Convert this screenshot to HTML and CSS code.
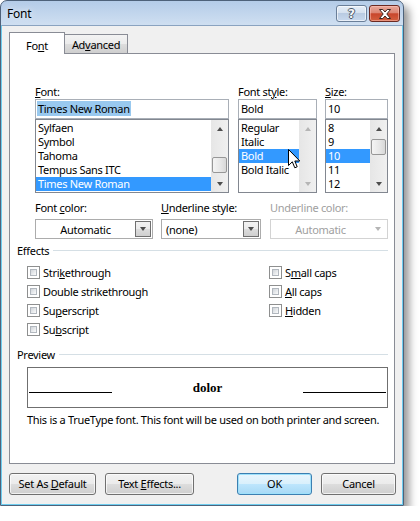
FILE: index.html
```html
<!DOCTYPE html>
<html>
<head>
<meta charset="utf-8">
<link rel="stylesheet" href="styles.css">
</head>
<body>
<div class="window">
  <div class="titlebar">
    <span class="title">Font</span>
    <div class="caption">
      <div class="cbtn help"><span>?</span></div>
      <div class="cbtn close">
        <svg width="12" height="10" viewBox="0 0 12 10"><path d="M0.5 0.5 H3.8 L6 3 L8.2 0.5 H11.5 L7.8 5 L11.5 9.5 H8.2 L6 7 L3.8 9.5 H0.5 L4.2 5 Z" fill="#fff" stroke="#3a2620" stroke-width="1"/></svg>
      </div>
    </div>
  </div>
  <div class="client">
    <div class="tabs">
      <div class="tab active">Fo<u>n</u>t</div>
      <div class="tab">Ad<u>v</u>anced</div>
    </div>
    <div class="panel">
      <div class="row1">
        <div class="col c-font">
          <div class="lbl"><u>F</u>ont:</div>
          <div class="input"><span class="hl">Times New Roman</span></div>
          <div class="list">
            <div class="items">
              <div class="item">Sylfaen</div>
              <div class="item">Symbol</div>
              <div class="item">Tahoma</div>
              <div class="item">Tempus Sans ITC</div>
              <div class="item sel">Times New Roman</div>
            </div>
            <div class="sb">
              <div class="sbtn"><i class="up"></i></div>
              <div class="track"><div class="thumb t-font"></div></div>
              <div class="sbtn"><i class="down"></i></div>
            </div>
          </div>
        </div>
        <div class="col c-style">
          <div class="lbl">Font st<u>y</u>le:</div>
          <div class="input"><span>Bold</span></div>
          <div class="list">
            <div class="items">
              <div class="item">Regular</div>
              <div class="item">Italic</div>
              <div class="item sel">Bold</div>
              <div class="item">Bold Italic</div>
            </div>
            <div class="sb">
              <div class="sbtn"><i class="up dis"></i></div>
              <div class="track"></div>
              <div class="sbtn"><i class="down dis"></i></div>
            </div>
          </div>
        </div>
        <div class="col c-size">
          <div class="lbl"><u>S</u>ize:</div>
          <div class="input"><span>10</span></div>
          <div class="list">
            <div class="items">
              <div class="item">8</div>
              <div class="item">9</div>
              <div class="item sel">10</div>
              <div class="item">11</div>
              <div class="item">12</div>
            </div>
            <div class="sb">
              <div class="sbtn"><i class="up"></i></div>
              <div class="track"><div class="thumb t-size"></div></div>
              <div class="sbtn"><i class="down"></i></div>
            </div>
          </div>
        </div>
      </div>

      <div class="row2">
        <div class="col d-color">
          <div class="lbl">Font <u>c</u>olor:</div>
          <div class="dd"><span class="val center">Automatic</span><span class="ddbtn"><i class="down"></i></span></div>
        </div>
        <div class="col d-ustyle">
          <div class="lbl"><u>U</u>nderline style:</div>
          <div class="dd"><span class="val left">(none)</span><span class="ddbtn"><i class="down"></i></span></div>
        </div>
        <div class="col d-ucolor">
          <div class="lbl dis-text">Underline color:</div>
          <div class="dd disabled"><span class="val center">Automatic</span><span class="ddbtn plain"><i class="down dis"></i></span></div>
        </div>
      </div>

      <div class="group-head"><span>Effects</span><div class="rule"></div></div>
      <div class="effects">
        <div class="ecol left">
          <div class="cbrow"><span class="cb"></span><span>Stri<u>k</u>ethrough</span></div>
          <div class="cbrow"><span class="cb"></span><span>Double strikethrough</span></div>
          <div class="cbrow"><span class="cb"></span><span>Su<u>p</u>erscript</span></div>
          <div class="cbrow"><span class="cb"></span><span>Su<u>b</u>script</span></div>
        </div>
        <div class="ecol">
          <div class="cbrow"><span class="cb"></span><span>S<u>m</u>all caps</span></div>
          <div class="cbrow"><span class="cb"></span><span><u>A</u>ll caps</span></div>
          <div class="cbrow"><span class="cb"></span><span><u>H</u>idden</span></div>
        </div>
      </div>

      <div class="group-head preview-head"><span>Preview</span><div class="rule"></div></div>
      <div class="preview">
        <div class="pline"></div>
        <div class="ptext"><span>dolor</span></div>
        <div class="pline"></div>
      </div>
      <div class="desc">This is a TrueType font. This font will be used on both printer and screen.</div>
    </div>
    <div class="buttons">
      <div class="btn b-default">Set As <u>D</u>efault</div>
      <div class="btn b-effects">Text <u>E</u>ffects...</div>
      <div class="btn b-ok">OK</div>
      <div class="btn b-cancel">Cancel</div>
    </div>
  </div>
  <svg class="cursor" width="13" height="21" viewBox="0 0 13 21"><path d="M0.5 0.5 L0.5 16.5 L4.3 12.8 L6.8 18.8 L9.2 17.8 L6.8 12 L11.8 12 Z" fill="#fff" stroke="#000" stroke-width="1" stroke-linejoin="miter"/></svg>
</div>
</body>
</html>
```

FILE: styles.css
```css
body {
  margin: 0;
  background: #fff;
  font-family: "Noto Sans", "Open Sans", sans-serif;
  font-size: 11px;
  letter-spacing: -0.3px;
  color: #000;
}
u { text-decoration: underline; text-underline-offset: 1px; }

.window {
  position: relative;
  width: 404px;
  height: 506px;
  box-sizing: border-box;
  border: 1px solid #4e627a;
  border-radius: 7px 7px 0 0;
  background: linear-gradient(180deg, #b4cce8 0, #cfdff1 24px, #b9d1ea 100%);
  box-shadow: 5px 6px 8px rgba(0, 0, 0, 0.42);
  display: flex;
  flex-direction: column;
}

.titlebar {
  height: 24px;
  display: flex;
  align-items: flex-start;
  padding-left: 6px;
  box-sizing: border-box;
}
.title {
  margin-top: 5px;
  line-height: 16px;
  font-size: 12px;
  letter-spacing: -0.2px;
  color: #000;
  text-shadow: 0 0 6px rgba(255,255,255,0.9);
}
.caption {
  margin-left: auto;
  margin-top: 4px;
  margin-right: 3px;
  display: flex;
  gap: 2px;
}
.cbtn {
  width: 31px;
  height: 17px;
  box-sizing: border-box;
  border-radius: 3px;
  display: flex;
  align-items: center;
  justify-content: center;
}
.help {
  border: 1px solid #6a7f99;
  background: linear-gradient(180deg, #e6eef8 0, #d5e1ef 45%, #b9cbe2 50%, #c8d9ee 100%);
  box-shadow: inset 0 0 0 1px rgba(255,255,255,0.6);
}
.help span {
  font-family: "DejaVu Sans", sans-serif;
  font-weight: bold;
  font-size: 12px;
  line-height: 12px;
  letter-spacing: 0;
  color: #f4f6f8;
  text-shadow: 1px 0 0 #4c5a6a, -1px 0 0 #4c5a6a, 0 1px 0 #4c5a6a, 0 -1px 0 #4c5a6a;
}
.close {
  width: 31px;
  border: 1px solid #6b2a22;
  background: linear-gradient(180deg, #e9a99b 0, #dc8573 45%, #c8462c 52%, #d4603f 100%);
  box-shadow: inset 0 0 0 1px rgba(255,200,190,0.5);
}
.close svg { display: block; }

.client {
  flex: 1;
  background: #f0f0f0;
  border: 1px solid #6ecdef;
  border-top-color: #8aa3c0;
  padding: 6px 7px 0 7px;
  display: flex;
  flex-direction: column;
}

.tabs {
  display: flex;
  align-items: flex-end;
  height: 22px;
  margin-bottom: -1px;
  position: relative;
  z-index: 1;
}
.tab {
  box-sizing: border-box;
  text-align: center;
  border: 1px solid #898c95;
}
.tab.active {
  width: 56px;
  height: 22px;
  background: #fff;
  border-bottom: none;
  padding-top: 4px;
  line-height: 17px;
}
.tab:not(.active) {
  width: 63px;
  height: 19px;
  margin-bottom: 1px;
  border-left: none;
  border-bottom: none;
  background: linear-gradient(180deg, #f3f3f3 0, #ebebeb 50%, #dddddd 50%, #cfcfcf 100%);
  padding-top: 1px;
  line-height: 17px;
}

.panel {
  height: 411px;
  box-sizing: border-box;
  border: 1px solid #898c95;
  background: #fff;
  display: flex;
  flex-direction: column;
}

.lbl {
  height: 15px;
  line-height: 15px;
  white-space: nowrap;
}
.dis-text { color: #a0a0a0; }

.row1 {
  display: flex;
  margin-top: 30px;
  margin-left: 25px;
}
.c-font { width: 194px; }
.c-style { width: 79px; margin-left: 9px; }
.c-size { width: 63px; margin-left: 8px; }

.input {
  height: 20px;
  box-sizing: border-box;
  border: 1px solid #a9afb7;
  padding: 1px 0 0 2px;
  line-height: 16px;
  white-space: nowrap;
  overflow: hidden;
}
.input .hl { background: #99c9ef; padding: 0 1px; margin-left: -1px; }

.list {
  height: 74px;
  box-sizing: border-box;
  border: 1px solid #828790;
  display: flex;
  overflow: hidden;
}
.items {
  flex: 1;
  padding-top: 1px;
  min-width: 0;
}
.item {
  height: 14px;
  line-height: 14px;
  padding-left: 2px;
  white-space: nowrap;
  overflow: hidden;
}
.item.sel { background: #3399ff; color: #fff; }

.sb {
  width: 17px;
  flex: none;
  display: flex;
  flex-direction: column;
  background: linear-gradient(90deg, #e6e6e6 0, #f0f0f0 100%);
}
.sbtn {
  height: 17px;
  display: flex;
  align-items: center;
  justify-content: center;
}
.track { flex: 1; }
.thumb {
  width: 15px;
  height: 16px;
  margin-left: 1px;
  box-sizing: border-box;
  border: 1px solid #979797;
  border-radius: 2px;
  background: linear-gradient(90deg, #f4f4f4 0, #e6e6e6 60%, #d8d8d8 100%);
}
.t-font { margin-top: 20px; }
.t-size { margin-top: 2px; }

i.up, i.down {
  display: block;
  width: 0;
  height: 0;
  border-left: 3.5px solid transparent;
  border-right: 3.5px solid transparent;
}
i.up { border-bottom: 4px solid #4d4d4d; }
i.down { border-top: 4px solid #4d4d4d; }
i.up.dis { border-bottom-color: #b5b5b5; }
i.down.dis { border-top-color: #b5b5b5; }

.row2 {
  display: flex;
  margin-top: 7px;
  margin-left: 25px;
}
.d-color { width: 118px; }
.d-ustyle { width: 100px; margin-left: 8px; }
.d-ucolor { width: 118px; margin-left: 9px; }

.dd {
  margin-top: 4px;
  height: 20px;
  box-sizing: border-box;
  border: 1px solid #acacac;
  background: #fff;
  display: flex;
  align-items: center;
}
.dd .val { flex: 1; white-space: nowrap; }
.dd .val.center { text-align: center; }
.dd .val.left { padding-left: 4px; }
.ddbtn {
  width: 16px;
  height: 16px;
  margin-right: 1px;
  box-sizing: border-box;
  border: 1px solid #707070;
  background: linear-gradient(180deg, #f2f2f2 0, #ebebeb 50%, #dddddd 50%, #cfcfcf 100%);
  display: flex;
  align-items: center;
  justify-content: center;
}
.ddbtn.plain { border: none; background: none; }
.dd.disabled { border-color: #d3d3d3; color: #a0a0a0; }

.group-head {
  display: flex;
  align-items: center;
  margin-top: 4px;
  margin-left: 7px;
  margin-right: 6px;
  height: 15px;
  line-height: 15px;
}
.group-head .rule {
  flex: 1;
  height: 1px;
  margin-left: 4px;
  background: #d5dfe5;
}
.preview-head { margin-top: 8px; }

.effects {
  display: flex;
  margin-top: 5px;
  margin-left: 17px;
}
.ecol.left { width: 242px; }
.cbrow {
  height: 19px;
  display: flex;
  align-items: center;
  white-space: nowrap;
}
.cb {
  width: 13px;
  height: 13px;
  box-sizing: border-box;
  border: 1px solid #8e8f8f;
  background: #fff;
  padding: 2px;
  margin-right: 3px;
  flex: none;
}
.cb::after {
  content: "";
  display: block;
  width: 7px;
  height: 7px;
  box-sizing: border-box;
  border: 1px solid #b1b7be;
  background: linear-gradient(135deg, #d0d4d9 0, #eef0f2 70%, #fafafa 100%);
}

.preview {
  margin-top: 5px;
  margin-left: 17px;
  width: 361px;
  height: 41px;
  box-sizing: border-box;
  border: 1px solid #6f6f6f;
  display: flex;
  align-items: flex-start;
}
.pline {
  width: 83px;
  height: 24px;
  margin: 0 1px;
  border-bottom: 1px solid #000;
  flex: none;
}
.ptext {
  flex: 1;
  text-align: center;
  padding-top: 12px;
}
.ptext span {
  font-family: "Liberation Serif", "Times New Roman", serif;
  font-weight: bold;
  font-size: 13px;
  line-height: 13px;
  letter-spacing: 0;
}

.desc {
  margin-top: 4px;
  margin-left: 17px;
  height: 15px;
  line-height: 15px;
  white-space: nowrap;
}

.buttons {
  display: flex;
  margin-top: 9px;
  height: 22px;
  margin-right: -1px;
}
.btn {
  height: 22px;
  box-sizing: border-box;
  border: 1px solid #707070;
  border-radius: 3px;
  background: linear-gradient(180deg, #f2f2f2 0, #ebebeb 50%, #dddddd 50%, #cfcfcf 100%);
  box-shadow: inset 0 0 0 1px rgba(255,255,255,0.7);
  text-align: center;
  line-height: 19px;
  white-space: nowrap;
}
.b-default { width: 87px; }
.b-effects { width: 89px; margin-left: 9px; }
.b-ok {
  width: 75px;
  margin-left: auto;
  border-color: #3c7fb1;
  background: linear-gradient(180deg, #eaf6fd 0, #d9f0fc 50%, #bee6fd 50%, #a7d9f5 100%);
  box-shadow: inset 0 0 0 1px #9ee1fb;
}
.b-cancel { width: 75px; margin-left: 9px; }

.cursor {
  position: absolute;
  left: 287px;
  top: 148px;
}
```
